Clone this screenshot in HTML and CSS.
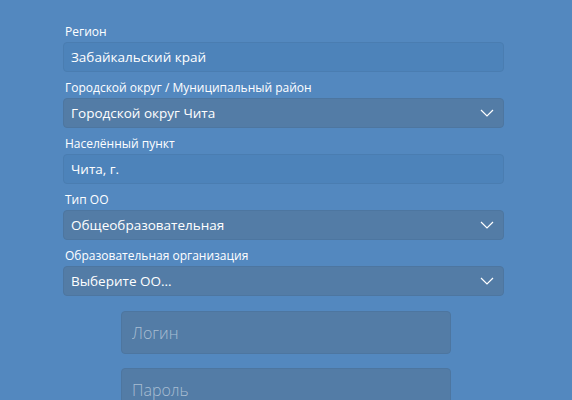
FILE: index.html
```html
<!DOCTYPE html>
<html lang="ru">
<head>
<meta charset="utf-8">
<link rel="stylesheet" href="styles.css">
</head>
<body>
<div class="page">
  <form class="form">
    <div class="group">
      <label class="label">Регион</label>
      <div class="field field-input">Забайкальский край</div>
    </div>
    <div class="group">
      <label class="label">Городской округ / Муниципальный район</label>
      <div class="field field-select">Городской округ Чита
        <svg class="chev" width="14" height="8" viewBox="0 0 14 8"><path d="M1 1 L7 7 L13 1" fill="none" stroke="#fff" stroke-width="1.2"/></svg>
      </div>
    </div>
    <div class="group">
      <label class="label">Населённый пункт</label>
      <div class="field field-input">Чита, г.</div>
    </div>
    <div class="group">
      <label class="label">Тип ОО</label>
      <div class="field field-select">Общеобразовательная
        <svg class="chev" width="14" height="8" viewBox="0 0 14 8"><path d="M1 1 L7 7 L13 1" fill="none" stroke="#fff" stroke-width="1.2"/></svg>
      </div>
    </div>
    <div class="group">
      <label class="label">Образовательная организация</label>
      <div class="field field-select">Выберите ОО...
        <svg class="chev" width="14" height="8" viewBox="0 0 14 8"><path d="M1 1 L7 7 L13 1" fill="none" stroke="#fff" stroke-width="1.2"/></svg>
      </div>
    </div>
  </form>
  <div class="login">
    <input class="login-input" type="text" placeholder="Логин">
    <input class="login-input" type="password" placeholder="Пароль">
  </div>
</div>
</body>
</html>
```
FILE: styles.css
```css
html, body {
  margin: 0;
  padding: 0;
  background: #5388bf;
  height: 100%;
  overflow: hidden;
}
.page {
  padding-top: 24px;
}
.form {
  width: 441px;
  margin-left: 63px;
  display: flex;
  flex-direction: column;
  gap: 8px;
}
.group {
  display: flex;
  flex-direction: column;
  gap: 2px;
}
.label {
  font-family: "Open Sans", sans-serif;
  font-size: 12px;
  line-height: 16px;
  color: #fff;
  padding-left: 2px;
}
.field {
  box-sizing: border-box;
  height: 30px;
  border-radius: 4px;
  display: flex;
  align-items: center;
  justify-content: space-between;
  padding: 0 9px 0 7px;
  font-family: "Open Sans", sans-serif;
  font-size: 13.5px;
  color: #fff;
}
.field-input {
  background: #4d83ba;
  border: 1px solid #4a7db1;
}
.field-select {
  background: #537ca6;
  border: 1px solid #4d76a0;
}
.chev {
  flex: none;
}
.login {
  display: flex;
  flex-direction: column;
  align-items: center;
  gap: 14px;
  margin-top: 15px;
}
.login-input {
  box-sizing: border-box;
  width: 330px;
  height: 43px;
  background: #537ca6;
  border: 1px solid #4d76a0;
  border-radius: 4px;
  padding: 0 10px;
  font-family: "Open Sans", sans-serif;
  font-size: 16px;
  font-weight: 300;
  color: #fff;
  outline: none;
}
.login-input::placeholder {
  color: #a9bed3;
}
```
